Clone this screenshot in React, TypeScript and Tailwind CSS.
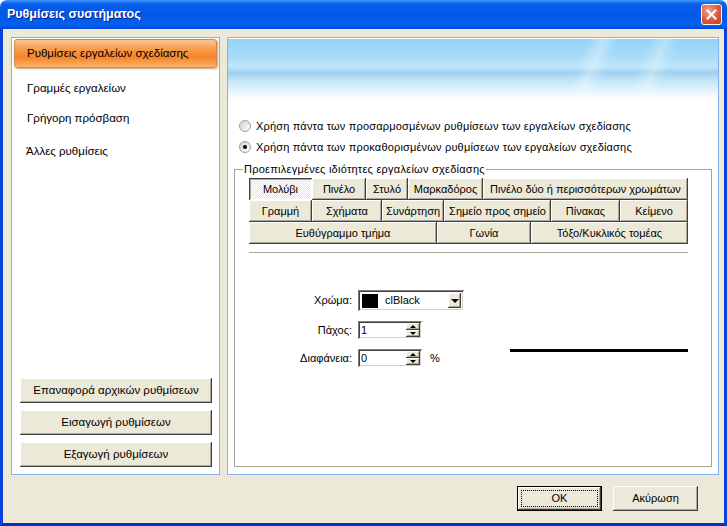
const raised =
  "bg-[#ece9d8] shadow-[inset_-1px_-1px_#404040,inset_1px_1px_#ffffff,inset_-2px_-2px_#aca899]";
const pressed =
  "bg-[repeating-conic-gradient(#ffffff_0%_25%,#ece9d8_0%_50%)] bg-size-[2px_2px] shadow-[inset_1px_1px_#404040,inset_-1px_-1px_#ffffff,inset_2px_2px_#aca899]";
const sunken =
  "bg-white shadow-[inset_1px_1px_#808080,inset_-1px_-1px_#ffffff,inset_2px_2px_#404040,inset_-2px_-2px_#d4d0c8]";

const toolRows = [
  [
    { label: "Μολύβι", w: "w-[63px]", on: true },
    { label: "Πινέλο", w: "w-[54px]" },
    { label: "Στυλό", w: "w-[42px]" },
    { label: "Μαρκαδόρος", w: "w-[75px]" },
    { label: "Πινέλο δύο ή περισσότερων χρωμάτων", w: "w-[205px]" },
  ],
  [
    { label: "Γραμμή", w: "w-[63px]" },
    { label: "Σχήματα", w: "w-[70px]" },
    { label: "Συνάρτηση", w: "w-[62px]" },
    { label: "Σημείο προς σημείο", w: "w-[107px]" },
    { label: "Πίνακας", w: "w-[69px]" },
    { label: "Κείμενο", w: "w-[68px]" },
  ],
  [
    { label: "Ευθύγραμμο τμήμα", w: "w-[188px]" },
    { label: "Γωνία", w: "w-[94px]" },
    { label: "Τόξο/Κυκλικός τομέας", w: "w-[157px]" },
  ],
];

function Tri({ up }: { up?: boolean }) {
  return up ? (
    <span className="h-0 w-0 border-x-[3px] border-b-[3px] border-x-transparent border-b-black" />
  ) : (
    <span className="h-0 w-0 border-x-[3px] border-t-[3px] border-x-transparent border-t-black" />
  );
}

function Spin({ value }: { value: string }) {
  return (
    <div className={`flex h-[18px] w-[64px] p-[2px] ${sunken}`}>
      <span className="flex-1 pl-[1px] text-[11px] leading-[14px]">{value}</span>
      <div className="flex w-[14px] flex-col">
        <div className={`flex flex-1 items-center justify-center ${raised}`}>
          <Tri up />
        </div>
        <div className={`flex flex-1 items-center justify-center ${raised}`}>
          <Tri />
        </div>
      </div>
    </div>
  );
}

function Radio({ checked, children }: { checked?: boolean; children: React.ReactNode }) {
  return (
    <div className="flex h-[16px] items-center gap-[5px]">
      <span className="flex h-[12px] w-[12px] items-center justify-center rounded-full border border-[#a0a0a0] bg-[linear-gradient(135deg,#d2d0c8,#ffffff)]">
        {checked && <span className="h-[4px] w-[4px] rounded-full bg-black" />}
      </span>
      <span className="text-[11px] tracking-[0.18px]">{children}</span>
    </div>
  );
}

function SideButton({ children }: { children: React.ReactNode }) {
  return (
    <div className={`flex h-[25px] w-[192px] items-center justify-center text-[11.5px] ${raised}`}>
      {children}
    </div>
  );
}

export default function App() {
  return (
    <div className="flex h-[526px] w-[727px] flex-col font-['Liberation_Sans',Arial,sans-serif] text-black">
      {/* title bar */}
      <div className="flex h-[29px] items-center rounded-t-[7px] bg-[linear-gradient(to_bottom,#3d95ff_0%,#0a5ee8_14%,#0058e6_50%,#0461f0_86%,#0149d6_100%)] pl-[7px] pr-[5px]">
        <span className="text-[12.5px] font-bold text-white [text-shadow:1px_1px_#0a1e8a]">
          Ρυθμίσεις συστήματος
        </span>
        <div className="ml-auto mb-[1px] flex h-[21px] w-[21px] items-center justify-center rounded-[3px] border border-white bg-[radial-gradient(circle_at_35%_30%,#f0a58c,#e0573a_55%,#c23c1c)]">
          <svg width="11" height="11" viewBox="0 0 11 11">
            <path d="M1.5 1.5L9.5 9.5M9.5 1.5L1.5 9.5" stroke="#fff" strokeWidth="2" strokeLinecap="square" />
          </svg>
        </div>
      </div>

      {/* body */}
      <div className="flex flex-1 flex-col border-x-[3px] border-b-[3px] border-x-[#0842d8] border-b-[#0a2ebd] bg-[#ece9d8] pt-[8px]">
        <div className="flex h-[438px] gap-[7px] pl-[8px] pr-[5px]">
          {/* left panel */}
          <div className="flex w-[209px] flex-col border border-[#89b0ea] bg-white px-[2px] pt-[1px] pb-[7px]">
            <div className="flex h-[29px] items-center rounded-[3px] border border-[#d08a4c] bg-[linear-gradient(to_bottom,#fcc690_0%,#f89a48_35%,#f6852a_65%,#fbb46a_100%)] pl-[12px] text-[11.5px] shadow-[1px_1px_2px_#c9a27c]">
              Ρυθμίσεις εργαλείων σχεδίασης
            </div>
            <div className="mt-[6px] flex h-[30px] items-center pl-[13px] text-[11.5px]">Γραμμές εργαλείων</div>
            <div className="flex h-[30px] items-center pl-[13px] text-[11.5px]">Γρήγορη πρόσβαση</div>
            <div className="mt-[3px] flex h-[30px] items-center pl-[12px] text-[11.5px]">Άλλες ρυθμίσεις</div>
            <div className="mt-auto flex flex-col gap-[7px] pl-[6px]">
              <SideButton>Επαναφορά αρχικών ρυθμίσεων</SideButton>
              <SideButton>Εισαγωγή ρυθμίσεων</SideButton>
              <SideButton>Εξαγωγή ρυθμίσεων</SideButton>
            </div>
          </div>

          {/* right panel */}
          <div className="flex w-[492px] flex-col border border-[#89b0ea] bg-white">
            <div className="h-[62px] border-t border-white bg-[linear-gradient(112deg,transparent_70%,rgba(255,255,255,0.35)_73%,transparent_76%,transparent_82%,rgba(255,255,255,0.3)_85%,transparent_88%),linear-gradient(to_bottom,#93d2f5_0%,#aadcf8_30%,#bfe5fa_45%,#9fd1f0_55%,#c6e7f9_70%,#ffffff_100%)]" />
            <div className="mt-[18px] flex flex-col gap-[5px] pl-[11px]">
              <Radio>Χρήση πάντα των προσαρμοσμένων ρυθμίσεων των εργαλείων σχεδίασης</Radio>
              <Radio checked>Χρήση πάντα των προκαθορισμένων ρυθμίσεων των εργαλείων σχεδίασης</Radio>
            </div>
            <fieldset className="mx-[6px] mt-[8px] mb-[7px] flex-1 border border-[#a5a294] px-[14px]">
              <legend className="-ml-[6px] px-[1px] text-[11px] leading-[13px] tracking-[0.25px]">
                Προεπιλεγμένες ιδιότητες εργαλείων σχεδίασης
              </legend>
              <div className="mt-[2px] flex w-[439px] flex-col">
                {toolRows.map((row, i) => (
                  <div key={i} className="flex h-[22px]">
                    {row.map((b) => (
                      <div
                        key={b.label}
                        className={`flex items-center justify-center whitespace-nowrap text-[11px] ${b.w} ${
                          "on" in b && b.on ? pressed : raised
                        }`}
                      >
                        {b.label}
                      </div>
                    ))}
                  </div>
                ))}
                <div className="mt-[8px] h-[2px] border-t border-b border-t-[#aca899] border-b-white" />

                <div className="mt-[36px] flex">
                  <div className="flex flex-col">
                    <div className="flex h-[21px] items-center">
                      <span className="w-[104px] pr-[1px] text-right text-[11px]">Χρώμα:</span>
                      <div className={`ml-[5px] flex h-[21px] w-[106px] items-center p-[2px] ${sunken}`}>
                        <span className="ml-[2px] h-[14px] w-[16px] bg-black" />
                        <span className="ml-[7px] text-[11px]">clBlack</span>
                        <div className={`ml-auto mr-[1px] flex h-[15px] w-[13px] items-center justify-center ${raised}`}>
                          <span className="h-0 w-0 border-x-[4px] border-t-[4px] border-x-transparent border-t-black" />
                        </div>
                      </div>
                    </div>
                    <div className="mt-[10px] flex h-[18px] items-center">
                      <span className="w-[104px] pr-[1px] text-right text-[11px]">Πάχος:</span>
                      <div className="ml-[5px]">
                        <Spin value="1" />
                      </div>
                    </div>
                    <div className="mt-[10px] flex h-[18px] items-center">
                      <span className="w-[104px] pr-[1px] text-right text-[11px]">Διαφάνεια:</span>
                      <div className="ml-[5px]">
                        <Spin value="0" />
                      </div>
                      <span className="ml-[8px] text-[11px]">%</span>
                    </div>
                  </div>
                  <div className="mt-[59px] ml-auto h-[3px] w-[178px] bg-black" />
                </div>
              </div>
            </fieldset>
          </div>
        </div>

        {/* dialog buttons */}
        <div className="mt-[11px] flex justify-end gap-[11px] pr-[26px]">
          <div className="h-[25px] w-[85px] border border-black">
            <div className={`flex h-full w-full items-center justify-center p-[3px] ${raised}`}>
              <span className="flex h-full w-full items-center justify-center border border-dotted border-black text-[11px]">
                OK
              </span>
            </div>
          </div>
          <div className={`flex h-[25px] w-[85px] items-center justify-center text-[11px] ${raised}`}>
            Ακύρωση
          </div>
        </div>
      </div>
    </div>
  );
}
